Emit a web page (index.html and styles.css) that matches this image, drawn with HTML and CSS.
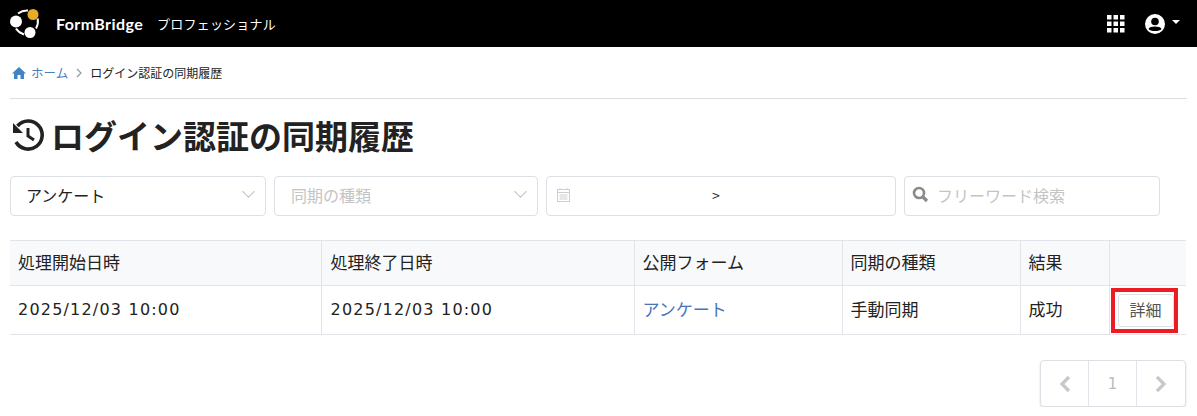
FILE: index.html
```html
<!DOCTYPE html>
<html>
<head>
  <meta charset="utf-8">
  <title>ログイン認証の同期履歴</title>
  <link rel="stylesheet" href="styles.css">
</head>
<body>
  <header class="topbar">
    <div class="brand">
      <svg class="logo" width="40" height="40" viewBox="0 0 40 40">
        <path d="M14 9.500 A15 15 0 0 1 24 6.500" fill="none" stroke="#fff" stroke-width="2"/>
        <path d="M33.700 14.500 A15 15 0 0 1 32 24.500" fill="none" stroke="#fff" stroke-width="2"/>
        <path d="M12 24.500 A15 15 0 0 0 20 30.500" fill="none" stroke="#fff" stroke-width="2"/>
        <circle cx="12" cy="17.500" r="6" fill="#fff"/>
        <circle cx="26" cy="28.500" r="5.500" fill="#fff"/>
        <circle cx="29" cy="10.500" r="5.500" fill="#e6ac27"/>
      </svg>
      <span class="brand-name">FormBridge</span>
      <span class="brand-plan">プロフェッショナル</span>
    </div>
    <div class="topbar-icons">
      <svg class="apps" width="18" height="18" viewBox="0 0 18 18" fill="#fff">
        <rect x="0" y="0" width="4.500" height="4.500"/><rect x="6.500" y="0" width="4.500" height="4.500"/><rect x="13" y="0" width="4.500" height="4.500"/>
        <rect x="0" y="6.500" width="4.500" height="4.500"/><rect x="6.500" y="6.500" width="4.500" height="4.500"/><rect x="13" y="6.500" width="4.500" height="4.500"/>
        <rect x="0" y="13" width="4.500" height="4.500"/><rect x="6.500" y="13" width="4.500" height="4.500"/><rect x="13" y="13" width="4.500" height="4.500"/>
      </svg>
      <svg class="user" width="20" height="20" viewBox="0 0 20 20">
        <circle cx="10" cy="10" r="10" fill="#fff"/>
        <circle cx="10" cy="7.500" r="3.800" fill="#000"/>
        <path d="M3.500 15 C5 11.800 15 11.800 16.500 15 C14.500 17.800 5.500 17.800 3.500 15 Z" fill="#000"/>
      </svg>
      <span class="caret"></span>
    </div>
  </header>

  <main class="content">
    <nav class="breadcrumb">
      <svg class="home" width="14" height="12" viewBox="0 0 14 12" fill="#3f84c5">
        <path d="M7 0 L14 6.500 L12 6.500 L12 12 L8.500 12 L8.500 8 L5.500 8 L5.500 12 L2 12 L2 6.500 L0 6.500 Z"/>
      </svg>
      <a class="crumb-link">ホーム</a>
      <svg class="crumb-sep" width="6" height="10" viewBox="0 0 6 10" fill="none" stroke="#999" stroke-width="1.200"><path d="M1 1 L5 5 L1 9"/></svg>
      <span>ログイン認証の同期履歴</span>
    </nav>

    <h1 class="title">
      <svg class="history" width="34" height="32" viewBox="0 0 34 32" fill="none" stroke="#222" stroke-width="3.600">
        <path d="M7.500 7 A14 14 0 1 1 6 23"/>
        <path d="M18 9 V17 L24 21" stroke-width="3"/>
        <path d="M3 4 L3 14 L13 14 Z" fill="#222" stroke="none"/>
      </svg>
      ログイン認証の同期履歴
    </h1>

    <div class="filters">
      <div class="field field-form">
        <span class="value">アンケート</span>
        <span class="chevron"></span>
      </div>
      <div class="field field-type">
        <span class="placeholder">同期の種類</span>
        <span class="chevron"></span>
      </div>
      <div class="field field-date">
        <svg width="13" height="14" viewBox="0 0 13 14" fill="none" stroke="#ccd0d4">
          <rect x="0.500" y="1.500" width="12" height="12"/>
          <path d="M0.500 4.500 H12.500 M2.500 7 H10.500 M2.500 9 H10.500 M2.500 11 H10.500 M3 0 V2 M10 0 V2"/>
        </svg>
        <span class="date-arrow">&gt;</span>
      </div>
      <div class="field field-search">
        <svg width="17" height="17" viewBox="0 0 17 17" fill="none" stroke="#8a8a8a">
          <circle cx="7" cy="7" r="5" stroke-width="2.600"/>
          <path d="M10.500 10.500 L15 15" stroke-width="3.200"/>
        </svg>
        <span class="placeholder">フリーワード検索</span>
      </div>
    </div>

    <table class="history-table">
      <thead>
        <tr>
          <th class="col-start">処理開始日時</th>
          <th class="col-end">処理終了日時</th>
          <th class="col-form">公開フォーム</th>
          <th class="col-type">同期の種類</th>
          <th class="col-result">結果</th>
          <th class="col-action"></th>
        </tr>
      </thead>
      <tbody>
        <tr>
          <td class="date">2025/12/03 10:00</td>
          <td class="date col-end">2025/12/03 10:00</td>
          <td><a class="form-link">アンケート</a></td>
          <td>手動同期</td>
          <td>成功</td>
          <td class="action"><span class="highlight"><button class="detail-btn">詳細</button></span></td>
        </tr>
      </tbody>
    </table>

    <div class="pager-row">
      <div class="pager">
        <span class="page-cell"><svg width="12" height="18" viewBox="0 0 12 18" fill="none" stroke="#c8c8c8" stroke-width="3.200"><path d="M10 2 L3 9 L10 16"/></svg></span>
        <span class="page-cell page-num">1</span>
        <span class="page-cell"><svg width="12" height="18" viewBox="0 0 12 18" fill="none" stroke="#c8c8c8" stroke-width="3.200"><path d="M2 2 L9 9 L2 16"/></svg></span>
      </div>
    </div>
  </main>
</body>
</html>
```

FILE: styles.css
```css
* {
  box-sizing: border-box;
}

body {
  margin: 0;
  background: #fff;
  color: #222;
  font-family: "Noto Sans CJK JP", "Noto Sans", sans-serif;
  font-size: 16px;
}

.topbar {
  display: flex;
  align-items: center;
  justify-content: space-between;
  height: 47px;
  background: #000;
  color: #fff;
}

.brand {
  display: flex;
  align-items: center;
  padding-left: 4px;
}

.logo {
  margin-right: 12px;
}

.brand-name {
  font-family: Lato, "Noto Sans", sans-serif;
  font-size: 16px;
  font-weight: 700;
  letter-spacing: 0.4px;
}

.brand-plan {
  margin-left: 14px;
  font-size: 13px;
  letter-spacing: 0.2px;
}

.topbar-icons {
  display: flex;
  align-items: center;
  padding-right: 17px;
}

.apps {
  margin-right: 20px;
}

.caret {
  margin-left: 7px;
  margin-bottom: 4px;
  border-top: 4px solid #fff;
  border-left: 4px solid transparent;
  border-right: 4px solid transparent;
}

.content {
  padding: 0 10px;
}

.breadcrumb {
  display: flex;
  align-items: center;
  height: 52px;
  border-bottom: 1px solid #ddd;
  padding-left: 2px;
  font-size: 12px;
}

.crumb-link {
  margin-left: 5px;
  font-size: 12.5px;
  color: #4a7fc0;
}

.crumb-sep {
  margin: 0 8px;
}

.title {
  display: flex;
  align-items: center;
  height: 40px;
  margin: 16px 0 21px;
  font-size: 33px;
  font-weight: 700;
}

.history {
  margin-right: 7px;
}

.filters {
  display: flex;
  gap: 8px;
  height: 40px;
  margin-bottom: 24px;
}

.field {
  display: flex;
  align-items: center;
  position: relative;
  padding-bottom: 3px;
  border: 1px solid #dcdfe3;
  border-radius: 4px;
  background: #fff;
}

.field-form {
  width: 256px;
  padding-left: 15px;
}

.field-type {
  width: 264px;
  padding-left: 16px;
}

.field-date {
  width: 350px;
  padding-left: 10px;
}

.field-search {
  width: 256px;
  padding-left: 7px;
}

.field-search .placeholder {
  margin-left: 8px;
}

.date-arrow {
  margin-left: 142px;
  font-size: 14px;
}

.placeholder {
  color: #c4c4c4;
}

.chevron {
  position: absolute;
  right: 12px;
  top: 10px;
  width: 9px;
  height: 9px;
  border-right: 1px solid #bbb;
  border-bottom: 1px solid #bbb;
  transform: rotate(45deg);
}

.history-table {
  width: calc(100% - 1px);
  border-collapse: collapse;
  table-layout: fixed;
  border-top: 1px solid #e1e4e8;
  border-bottom: 1px solid #e1e4e8;
}

.history-table th,
.history-table td {
  padding: 0 8px 3px;
  border-right: 1px solid #e1e4e8;
  text-align: left;
  font-weight: 400;
  font-size: 17px;
}

.history-table th:last-child,
.history-table td:last-child {
  border-right: none;
}

.history-table th {
  height: 45px;
  background: #f8f9fb;
  border-bottom: 1px solid #e1e4e8;
}

.history-table td {
  height: 49px;
}

.history-table .col-end {
  padding-left: 9px;
}

.col-start { width: 311px; }
.col-end { width: 313px; }
.col-form { width: 208px; }
.col-type { width: 178px; }
.col-result { width: 89px; }

.history-table td.date {
  padding-bottom: 1px;
  font-family: "DejaVu Sans", sans-serif;
  font-size: 16px;
  letter-spacing: 1.2px;
}

.form-link {
  color: #4a72b8;
}

.history-table td.action {
  padding: 0 0 0 1px;
}

.highlight {
  display: block;
  width: 67px;
  height: 45px;
  padding: 2px 3px;
  border: 4px solid #ec1c24;
}

.detail-btn {
  display: block;
  width: 56px;
  height: 33px;
  padding: 0 0 3px;
  border: 1px solid #dcdfe3;
  border-radius: 3px;
  background: #fff;
  color: #555;
  font: inherit;
  font-size: 16px;
}

.pager-row {
  display: flex;
  justify-content: flex-end;
  margin-top: 25px;
  padding-right: 1px;
}

.pager {
  display: flex;
  height: 47px;
  border: 1px solid #dcdfe3;
  border-radius: 4px;
  box-shadow: 0 1px 2px rgba(0, 0, 0, 0.15);
}

.page-cell {
  display: flex;
  align-items: center;
  justify-content: center;
  width: 48px;
  border-right: 1px solid #e1e4e8;
  color: #bbb;
}

.page-num {
  font-family: "DejaVu Sans", sans-serif;
  font-size: 15px;
}

.page-cell:last-child {
  border-right: none;
}
```
